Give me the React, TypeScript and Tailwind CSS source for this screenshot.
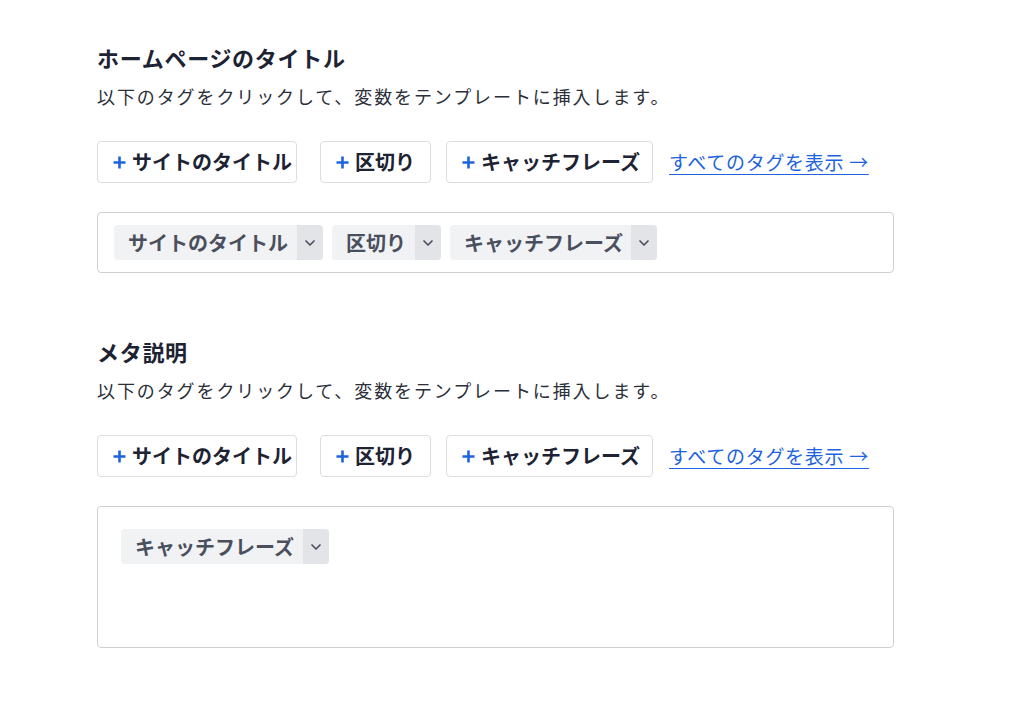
import React from "react";

const FONT = { fontFamily: '"Noto Sans CJK JP", "Noto Sans", sans-serif' };

function Plus() {
  return (
    <svg width="13" height="13" viewBox="0 0 13 13" className="shrink-0">
      <path d="M6.5 0.5v12M0.5 6.5h12" stroke="#1d63e0" strokeWidth="2.6" strokeLinecap="butt" />
    </svg>
  );
}

function Chevron() {
  return (
    <svg width="12" height="8" viewBox="0 0 12 8">
      <path d="M2 2l4 4 4-4" fill="none" stroke="#4b5160" strokeWidth="1.7" strokeLinecap="round" strokeLinejoin="round" />
    </svg>
  );
}

function AddButton({ label, w, ml }: { label: string; w: string; ml: string }) {
  return (
    <button
      className={`${w} ${ml} h-[42px] flex items-center gap-[6px] pl-[15px] border border-[#dcdde0] rounded-[4px] bg-white text-[#1d2333] font-bold text-[20px] tracking-[0px]`}
    >
      <Plus />
      <span>{label}</span>
    </button>
  );
}

function Tag({ label, w }: { label: string; w: string }) {
  return (
    <div className={`${w} h-[35px] flex rounded-[4px] bg-[#f1f2f4] overflow-hidden`}>
      <div className="flex-1 flex items-center pl-[14px] text-[20px] font-bold text-[#4a4f5e] tracking-[0px]">
        {label}
      </div>
      <div className="w-[26px] bg-[#e3e4e8] flex items-center justify-center">
        <Chevron />
      </div>
    </div>
  );
}

function Section({
  title,
  tags,
  boxH,
  boxPad,
}: {
  title: string;
  tags: { label: string; w: string }[];
  boxH: string;
  boxPad: string;
}) {
  return (
    <div>
      <h2 className="text-[22px] font-bold text-[#1d2333] tracking-[0.7px] leading-[30px]">{title}</h2>
      <p className="mt-[9px] text-[18px] text-[#2b2f3a] tracking-[1.9px] leading-[30px]">
        以下のタグをクリックして、変数をテンプレートに挿入します。
      </p>
      <div className="mt-[30px] flex items-center">
        <AddButton label="サイトのタイトル" w="w-[200px]" ml="ml-0" />
        <AddButton label="区切り" w="w-[111px]" ml="ml-[23px]" />
        <AddButton label="キャッチフレーズ" w="w-[207px]" ml="ml-[15px]" />
        <a className="ml-[16px] text-[19px] text-[#1d63e0] underline underline-offset-[4px] tracking-[0.7px]" href="#">
          すべてのタグを表示 →
        </a>
      </div>
      <div className={`mt-[29px] w-[797px] ${boxH} ${boxPad} border border-[#d0d1d6] rounded-[4px] bg-white flex items-start gap-[9px]`}>
        {tags.map((t) => (
          <Tag key={t.label} label={t.label} w={t.w} />
        ))}
      </div>
    </div>
  );
}

export default function App() {
  return (
    <div className="w-[1024px] h-[719px] bg-white overflow-hidden" style={FONT}>
      <div className="pl-[97px] pt-[42px]">
        <Section
          title="ホームページのタイトル"
          boxH="h-[61px]"
          boxPad="pl-[16px] pt-[12px]"
          tags={[
            { label: "サイトのタイトル", w: "w-[209px]" },
            { label: "区切り", w: "w-[109px]" },
            { label: "キャッチフレーズ", w: "w-[207px]" },
          ]}
        />
        <div className="mt-[63px]">
          <Section
            title="メタ説明"
            boxH="h-[142px]"
            boxPad="pl-[23px] pt-[22px]"
            tags={[{ label: "キャッチフレーズ", w: "w-[208px]" }]}
          />
        </div>
      </div>
    </div>
  );
}
